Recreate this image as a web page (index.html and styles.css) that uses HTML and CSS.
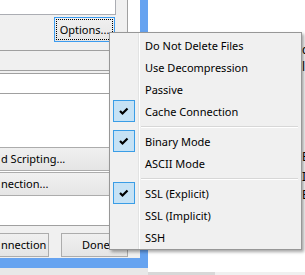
FILE: index.html
```html
<!DOCTYPE html>
<html>
<head>
<meta charset="utf-8">
<link rel="stylesheet" href="styles.css">
</head>
<body>
<div class="screen">
  <div class="dlgcol">
    <div class="dialog">
      <div class="client">
        <div class="leftcol">
          <div class="field"></div>
          <div class="optrow">
            <div class="btn focus"><span class="focusrect">Options...</span></div>
          </div>
          <div class="band gray"></div>
          <div class="band white"></div>
          <div class="list">
            <div class="btn wide"><span class="cut">d Scripting...</span></div>
            <div class="btn wide"><span class="cut">nection...</span></div>
          </div>
          <div class="btnrow">
            <div class="btn conn"><span class="cut">nnection</span></div>
            <div class="btn done">Done</div>
          </div>
        </div>
        <div class="rstrip"></div>
      </div>
    </div>
    <div class="under"></div>
  </div>
  <div class="behind">
    <div class="bwhite">
      <div class="frag f1">c</div>
      <div class="frag f2">l</div>
      <div class="frag f3">E</div>
      <div class="frag f4">I</div>
      <div class="frag f5">E</div>
    </div>
    <div class="bstrip"><div class="seg"></div></div>
  </div>
</div>

<div class="menu">
  <div class="item"><span class="ic"></span><span class="lbl">Do Not Delete Files</span></div>
  <div class="item"><span class="ic"></span><span class="lbl">Use Decompression</span></div>
  <div class="item"><span class="ic"></span><span class="lbl">Passive</span></div>
  <div class="item"><span class="ic chk"><svg width="20" height="20" viewBox="0 0 20 20"><path d="M6 10 L8.5 12.5 L13.5 7.5" fill="none" stroke="#000" stroke-width="2.2"/></svg></span><span class="lbl">Cache Connection</span></div>
  <div class="sep"></div>
  <div class="item"><span class="ic chk"><svg width="20" height="20" viewBox="0 0 20 20"><path d="M6 10 L8.5 12.5 L13.5 7.5" fill="none" stroke="#000" stroke-width="2.2"/></svg></span><span class="lbl">Binary Mode</span></div>
  <div class="item"><span class="ic"></span><span class="lbl">ASCII Mode</span></div>
  <div class="sep"></div>
  <div class="item"><span class="ic chk"><svg width="20" height="20" viewBox="0 0 20 20"><path d="M6 10 L8.5 12.5 L13.5 7.5" fill="none" stroke="#000" stroke-width="2.2"/></svg></span><span class="lbl">SSL (Explicit)</span></div>
  <div class="item"><span class="ic"></span><span class="lbl">SSL (Implicit)</span></div>
  <div class="item"><span class="ic"></span><span class="lbl">SSH</span></div>
</div>
</body>
</html>
```

FILE: styles.css
```css
* { box-sizing: border-box; }
html, body { margin: 0; padding: 0; }
body {
  width: 305px;
  height: 275px;
  overflow: hidden;
  position: relative;
  background: #fff;
  font-family: "Noto Sans", "Open Sans", sans-serif;
  font-size: 11px;
  color: #000;
}
.screen { display: flex; width: 305px; height: 275px; }
.dlgcol { width: 148px; flex-shrink: 0; display: flex; flex-direction: column; }
.dialog {
  width: 148px;
  height: 268px;
  border-right: 8px solid #66a3f0;
  border-bottom: 10px solid #66a3f0;
}
.under { flex: 1; background: #e8e8e8; }
.client { display: flex; height: 258px; background: #f0f0f0; }
.leftcol { width: 127px; flex-shrink: 0; display: flex; flex-direction: column; }
.field {
  width: 116px;
  height: 15px;
  background: #fff;
  border-right: 1px solid #abadb3;
  border-bottom: 1px solid #abadb3;
}
.optrow { margin-top: 2px; padding-left: 54px; display: flex; }
.btn {
  display: flex;
  align-items: center;
  justify-content: center;
  height: 24px;
  flex-shrink: 0;
  background: linear-gradient(#f0f0f0, #e5e5e5);
  border: 1px solid #acacac;
  white-space: nowrap;
  line-height: 14px;
}
.btn.focus {
  width: 61px;
  height: 25px;
  border-color: #3c9cf0;
  padding: 1px;
  align-items: stretch;
}
.focusrect {
  flex: 1;
  display: flex;
  align-items: center;
  justify-content: center;
  border: 1px dotted #000;
}
.band { height: 21px; border-top: 1px solid #a0a0a0; border-bottom: 1px solid #a0a0a0; }
.band.gray { margin-top: 8px; background: #f0f0f0; }
.band.white { margin-top: 2px; background: #fff; }
.list {
  height: 132px;
  background: #fff;
  border-bottom: 1px solid #a0a0a0;
  padding-top: 53px;
  display: flex;
  flex-direction: column;
  gap: 1px;
}
.btn.wide { width: 127px; border-left: none; justify-content: flex-start; }
.cut { padding-left: 1px; }
.btnrow { padding-top: 7px; display: flex; }
.btn.conn { width: 49px; border-left: none; justify-content: flex-start; }
.btn.done { width: 67px; margin-left: 12px; justify-content: flex-start; padding-left: 20px; }
.rstrip { width: 13px; height: 200px; background: #fff; border-left: 1px solid #a0a0a0; }

.behind { flex: 1; display: flex; flex-direction: column; }
.bwhite { height: 272px; background: #fff; padding-left: 154px; display: flex; flex-direction: column; }
.frag { height: 14px; line-height: 14px; white-space: nowrap; font-size: 12px; }
.f1 { margin-top: 43px; }
.f2 { margin-top: 3px; }
.f3 { margin-top: 76px; }
.f4 { margin-top: 6px; }
.f5 { margin-top: 4px; }
.bstrip { flex: 1; background: #f0f0f0; }
.seg { width: 67px; height: 3px; background: #d8d8d8; }

.menu {
  position: absolute;
  left: 109px;
  top: 32px;
  width: 193px;
  height: 218px;
  border: 1px solid #979797;
  padding: 1px 1px;
  background-color: #f0f0f0;
  background-image: linear-gradient(to right, transparent 28px, #e2e3e3 28px, #e2e3e3 29px, #fff 29px, #fff 30px, transparent 30px);
  background-origin: padding-box;
  box-shadow: 2px 2px 3px rgba(0,0,0,0.35);
}
.item { height: 22px; display: flex; align-items: center; padding-left: 2px; }
.ic { width: 22px; height: 22px; flex-shrink: 0; display: flex; align-items: center; justify-content: center; }
.ic.chk { background: #c6e2f5; border: 1px solid #3a9de6; }
.lbl { margin-left: 10px; white-space: nowrap; }
.sep {
  margin: 4px 2px 2px 30px;
  height: 2px;
  background: linear-gradient(#d7d7d7 50%, #fff 50%);
}
```
